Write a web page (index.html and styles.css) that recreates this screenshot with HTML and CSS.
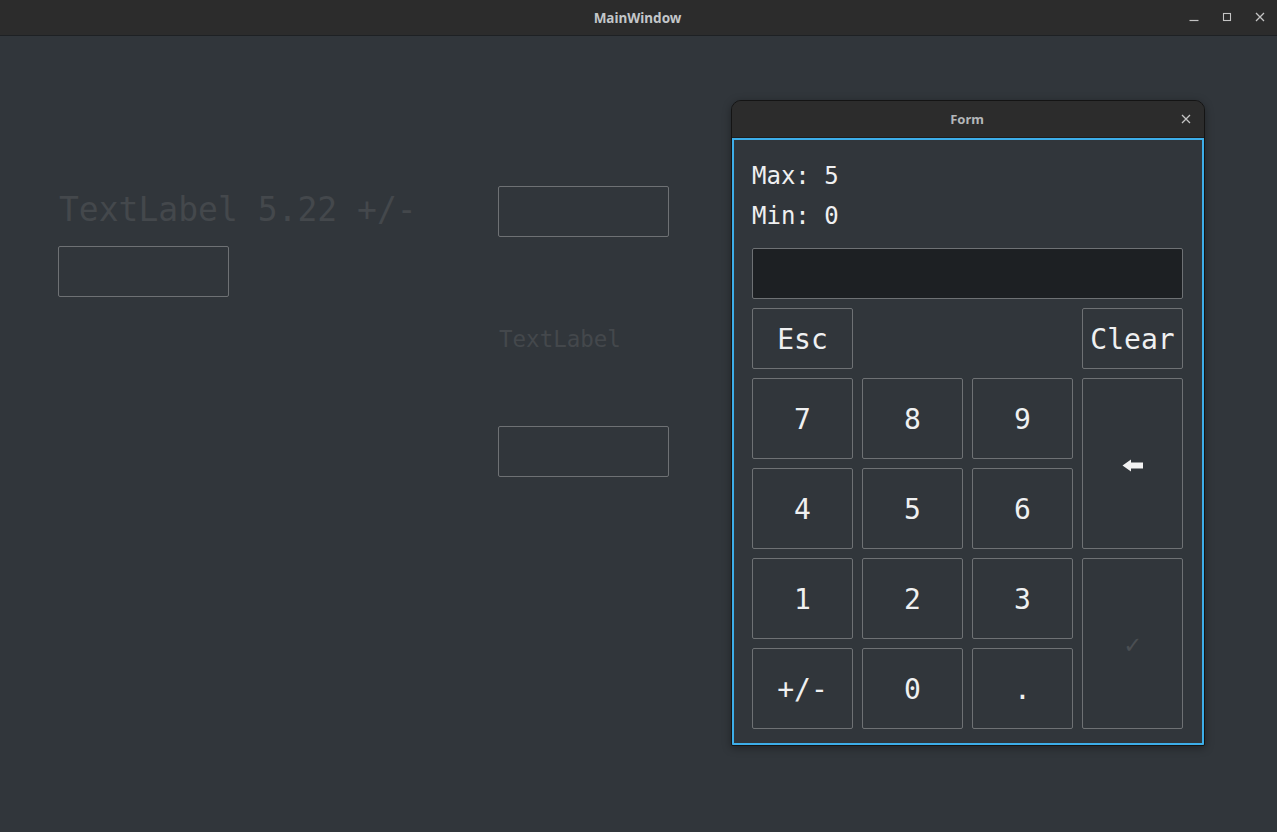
FILE: index.html
```html
<!DOCTYPE html>
<html>
<head>
<meta charset="utf-8">
<link rel="stylesheet" href="styles.css">
</head>
<body>
<div class="main-window">
  <header class="titlebar">
    <span class="title">MainWindow</span>
    <div class="controls">
      <svg class="ctl" width="12" height="12" viewBox="0 0 12 12"><path d="M1.5 9.5h9" stroke="#c4c4c4" stroke-width="1.2"/></svg>
      <svg class="ctl" width="12" height="12" viewBox="0 0 12 12"><rect x="2.5" y="2.5" width="7" height="7" fill="none" stroke="#c4c4c4" stroke-width="1.1"/></svg>
      <svg class="ctl" width="12" height="12" viewBox="0 0 12 12"><path d="M2 2l8 8M10 2l-8 8" stroke="#c4c4c4" stroke-width="1.3"/></svg>
    </div>
  </header>
  <main class="central">
    <section class="col col-left">
      <div class="big-label">TextLabel 5.22 +/-</div>
      <div class="field"></div>
    </section>
    <section class="col col-mid">
      <div class="field"></div>
      <div class="small-label">TextLabel</div>
      <div class="field"></div>
    </section>
  </main>

  <div class="form-window">
    <header class="form-titlebar">
      <span class="form-title">Form</span>
      <svg class="form-close" width="10" height="10" viewBox="0 0 10 10"><path d="M1 1l8 8M9 1l-8 8" stroke="#c4c4c4" stroke-width="1.3"/></svg>
    </header>
    <div class="form-body">
      <div class="info">Max: 5</div>
      <div class="info">Min: 0</div>
      <div class="display"></div>
      <div class="pad">
        <button class="key">Esc</button>
        <div class="spacer"></div>
        <button class="key">Clear</button>
        <button class="key">7</button>
        <button class="key">8</button>
        <button class="key">9</button>
        <button class="key k-back"><svg width="21" height="13" viewBox="0 0 21 13"><path d="M0.5 6.5L9 0.5V3.5H21V9.5H9V12.5Z" fill="#f2f2f2"/></svg></button>
        <button class="key">4</button>
        <button class="key">5</button>
        <button class="key">6</button>
        <button class="key">1</button>
        <button class="key">2</button>
        <button class="key">3</button>
        <button class="key k-ok">✓</button>
        <button class="key">+/-</button>
        <button class="key">0</button>
        <button class="key">.</button>
      </div>
    </div>
  </div>
</div>
</body>
</html>
```

FILE: styles.css
```css
* { box-sizing: border-box; }
html, body {
  margin: 0;
  padding: 0;
  width: 1277px;
  height: 832px;
  overflow: hidden;
  background: #31363b;
}
.main-window {
  position: relative;
  width: 1277px;
  height: 832px;
  background: #31363b;
  font-family: "DejaVu Sans Mono", "Liberation Mono", monospace;
}
.titlebar {
  height: 36px;
  background: #2c2c2c;
  border-bottom: 1px solid #1e2124;
  display: flex;
  align-items: center;
  justify-content: center;
  position: relative;
}
.title {
  font-family: "Noto Sans", "DejaVu Sans", sans-serif;
  font-weight: 700;
  font-size: 13.5px;
  color: #c3c6c9;
  margin-top: 1px;
  margin-left: -2px;
}
.controls {
  position: absolute;
  right: 11px;
  top: 11px;
  display: flex;
  gap: 21px;
}
.ctl { display: block; }

.central {
  display: flex;
  padding-left: 58px;
}
.col { display: flex; flex-direction: column; }
.col-left {
  width: 440px;
  padding-top: 154px;
}
.big-label {
  font-size: 33px;
  line-height: 40px;
  color: #44484c;
  padding-left: 1px;
  white-space: nowrap;
  margin-bottom: 16px;
}
.field {
  width: 171px;
  height: 51px;
  border: 1px solid #6e7174;
  border-radius: 2px;
  background: #31363b;
}
.col-mid {
  padding-top: 150px;
}
.small-label {
  font-size: 22.5px;
  line-height: 30px;
  color: #44484c;
  padding-left: 1px;
  margin: 87px 0 72px;
}

.form-window {
  position: absolute;
  left: 731px;
  top: 100px;
  width: 474px;
  border: 1px solid #141414;
  border-radius: 10px 10px 2px 2px;
  background: #2c2c2c;
  box-shadow: 0 2px 8px rgba(0,0,0,0.35);
  overflow: hidden;
}
.form-titlebar {
  height: 37px;
  background: #2c2c2c;
  border-bottom: 1px solid #1e1e1e;
  display: flex;
  align-items: center;
  justify-content: center;
  position: relative;
}
.form-title {
  font-family: "Noto Sans", "DejaVu Sans", sans-serif;
  font-weight: 700;
  font-size: 13px;
  color: #b4b7ba;
  margin-left: -2px;
}
.form-close {
  position: absolute;
  right: 13px;
  top: 13px;
}
.form-body {
  border: 2px solid #3daee9;
  background: #31363b;
  padding: 16px 19px 14px 18px;
  display: flex;
  flex-direction: column;
}
.info {
  font-size: 24px;
  line-height: 40px;
  color: #eff0f1;
}
.display {
  margin-top: 12px;
  height: 51px;
  background: #1d2023;
  border: 1px solid #6e7174;
  border-radius: 2px;
}
.pad {
  margin-top: 9px;
  display: grid;
  grid-template-columns: repeat(4, 101px);
  grid-template-rows: 61px repeat(4, 81px);
  gap: 9px;
}
.spacer { grid-column: 2 / span 2; }
.key {
  font-family: "DejaVu Sans Mono", "Liberation Mono", monospace;
  font-size: 28px;
  color: #eff0f1;
  background: #31363b;
  border: 1px solid #6e7174;
  border-radius: 2px;
  padding: 2px 0 0;
  margin: 0;
  display: flex;
  align-items: center;
  justify-content: center;
}
.k-back { grid-column: 4; grid-row: 2 / span 2; padding: 4px 0 0; }
.k-ok { grid-column: 4; grid-row: 4 / span 2; color: #4a4e52; font-size: 26px; padding: 0; }
.k-back svg { display: block; }
```
